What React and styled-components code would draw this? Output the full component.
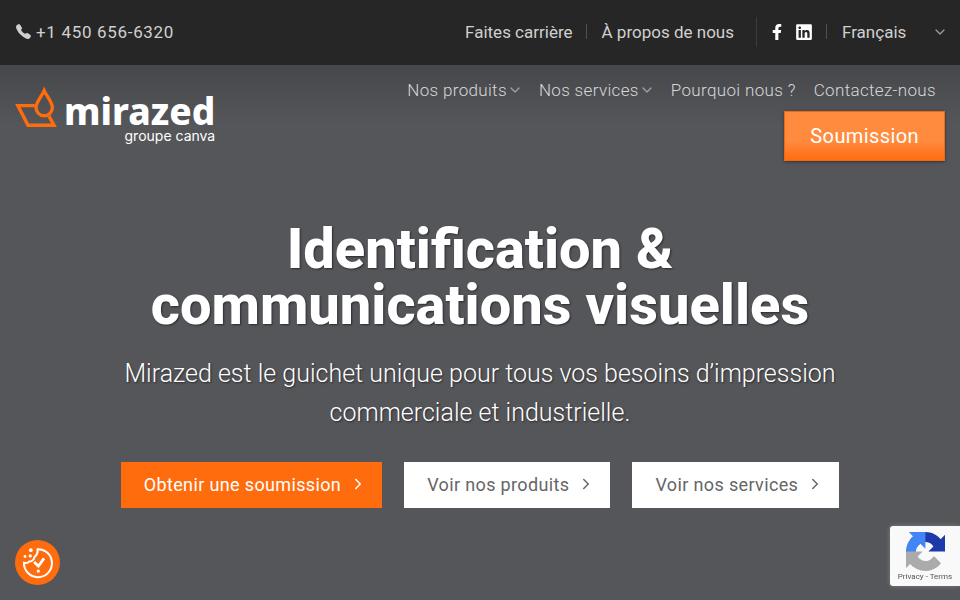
import React from 'react';
import styled, { createGlobalStyle } from 'styled-components';
import { FaFacebookF, FaLinkedin } from 'react-icons/fa';
import { FiChevronDown, FiChevronRight } from 'react-icons/fi';
import { IoCall } from 'react-icons/io5';

const GlobalStyle = createGlobalStyle`
  * {
    box-sizing: border-box;
  }
  body {
    margin: 0;
    background: #55565a;
    color: white;
    font-family: Roboto, 'Liberation Sans', sans-serif;
  }
  a {
    color: inherit;
    text-decoration: none;
  }
`;

const TopBar = styled.div`
  display: flex;
  justify-content: space-between;
  align-items: center;
  min-height: 65px;
  padding: 0 15px 2px;
  background: #262626;
  color: #d0d0d0;
  font-size: 17px;
`;

const Phone = styled.a`
  display: flex;
  align-items: center;
  gap: 4px;
  letter-spacing: 0.04em;
`;

const TopLinks = styled.div`
  display: flex;
  align-items: center;
`;

const Divider = styled.span`
  width: 1px;
  height: ${({ $tall }) => ($tall ? '30px' : '15px')};
  margin: ${({ $tall }) => ($tall ? '0 12px 0 22px' : '0 15px 0 13px')};
  background: ${({ $tall }) => ($tall ? '#3c3c3c' : '#505050')};
`;

const Socials = styled.div`
  display: flex;
  align-items: center;
  gap: 10px;
  color: white;
  a {
    display: flex;
  }
`;

const Language = styled.label`
  display: grid;
  align-items: center;
  width: 103px;
  select,
  svg {
    grid-area: 1 / 1;
  }
  select {
    appearance: none;
    width: 100%;
    padding: 0;
    border: 0;
    background: transparent;
    color: inherit;
    font: inherit;
  }
  svg {
    justify-self: end;
    margin-right: -3px;
    color: #999;
    pointer-events: none;
  }
`;

const Header = styled.header`
  display: flex;
  justify-content: space-between;
  align-items: flex-start;
  padding: 10px 15px 0;
  background: linear-gradient(#46474b, #55565a 60px);
`;

const LogoLink = styled.a`
  display: flex;
  align-items: flex-start;
  gap: 6px;
  padding-top: 11px;
`;

const LogoText = styled.span`
  display: flex;
  flex-direction: column;
  align-items: flex-end;
  padding-top: 6px;
`;

const LogoName = styled.span`
  font-family: 'Noto Sans', sans-serif;
  font-size: 37px;
  font-weight: 800;
  line-height: 38px;
`;

const LogoGroup = styled.span`
  font-family: Inter, sans-serif;
  font-size: 14px;
  line-height: 12px;
`;

const HeaderRight = styled.div`
  display: flex;
  flex-direction: column;
  align-items: flex-end;
`;

const Nav = styled.nav`
  display: flex;
  gap: 18px;
  padding-right: 9px;
  color: #d7d7d8;
  font-size: 17px;
  font-weight: 300;
  line-height: 30px;
  letter-spacing: 0.02em;
`;

const NavLink = styled.a`
  display: flex;
  align-items: center;
  svg {
    margin-right: -2px;
    color: #a0a0a2;
  }
`;

const QuoteButton = styled.button`
  height: 50px;
  margin-top: 6px;
  padding: 0 25px;
  border: 1px solid #f2680f;
  background: linear-gradient(#ff8b3e 60%, #ff6d10);
  box-shadow: 0 1px 3px rgba(0, 0, 0, 0.4);
  color: white;
  font-family: inherit;
  font-size: 20px;
  letter-spacing: 0.02em;
`;

const Hero = styled.main`
  display: flex;
  flex-direction: column;
  align-items: center;
  padding: 60px 30px 92px;
  text-align: center;
  text-shadow: 1px 1px 2px rgba(0, 0, 0, 0.5);
`;

const Title = styled.h1`
  max-width: 720px;
  margin: 0;
  font-size: 56px;
  font-weight: 800;
  line-height: 56px;
`;

const Lead = styled.p`
  max-width: 740px;
  margin: 21px 0 30px;
  font-size: 25px;
  font-weight: 300;
  line-height: 39px;
`;

const Actions = styled.div`
  display: flex;
  flex-wrap: wrap;
  justify-content: center;
  gap: 22px;
`;

const Action = styled.button`
  display: flex;
  align-items: center;
  gap: 8px;
  height: 46px;
  padding: 0 15px 2px 23px;
  border: 0;
  background: ${({ $primary }) => ($primary ? '#ff6c0e' : 'white')};
  color: ${({ $primary }) => ($primary ? 'white' : '#666')};
  font-family: inherit;
  font-size: 18px;
  letter-spacing: 0.02em;
  text-shadow: none;
`;

const CookieButton = styled.button`
  position: fixed;
  left: 15px;
  bottom: 15px;
  width: 45px;
  height: 45px;
  padding: 0;
  border: 0;
  border-radius: 50%;
  background: #ff6c0e;
  svg {
    display: block;
  }
`;

const Captcha = styled.aside`
  position: fixed;
  right: 0;
  bottom: 14px;
  display: flex;
  flex-direction: column;
  align-items: center;
  width: 70px;
  height: 60px;
  padding-top: 6px;
  border-radius: 3px 0 0 3px;
  background: #f9f9f9;
  box-shadow: 0 0 5px gray;
  color: #555;
  font-size: 8px;
  line-height: 12px;
`;

const LogoMark = () => (
  <svg width="43" height="42" viewBox="0 0 43 42" fill="none" stroke="#ff6c0e" strokeWidth="3.4">
    <path d="M19.8 19.6H2.9L13 39.2h26l-5-9" />
    <path d="M29.2 4.6C26.6 10.4 21 16.4 21 21.6a8.2 8.2 0 0 0 16.4 0C37.4 16.4 31.8 10.4 29.2 4.6z" />
  </svg>
);

const CookieIcon = () => (
  <svg width="45" height="45" viewBox="0 0 45 45" fill="none" stroke="white">
    <path
      d="M22.5 9.2A14 14 0 1 1 9 22.6c2 .8 4.2.5 5.4-1.2 2.6.2 4.9-1.7 5-4.3 2.4-1.8 3.6-4.7 3.1-7.9z"
      strokeWidth="2"
      strokeLinejoin="round"
    />
    <path d="M19.2 22l4.2 4.2 5.6-7.8" strokeWidth="2.8" />
    <g fill="white" stroke="none">
      <rect x="21.9" y="29.7" width="2.8" height="2.8" />
      <circle cx="15.8" cy="10.2" r="1.9" />
      <circle cx="10" cy="16.5" r="1.4" />
      <circle cx="15.2" cy="15.9" r="1.6" />
    </g>
  </svg>
);

const CaptchaIcon = () => (
  <svg width="39" height="39" viewBox="0 0 64 64">
    <path
      fill="#1c3aa9"
      d="M64 31.955l-.033-1.37V4.687l-7.16 7.16C50.948 4.674 42.033.093 32.05.093c-10.4 0-19.622 4.96-25.458 12.64l11.736 11.86a15.55 15.55 0 0 1 4.754-5.334c2.05-1.6 4.952-2.906 8.968-2.906.485 0 .86.057 1.135.163 4.976.393 9.288 3.14 11.828 7.124l-8.307 8.307L64 31.953"
    />
    <path
      fill="#4285f4"
      d="M31.862.094l-1.37.033H4.594l7.16 7.16C4.58 13.147 0 22.06 0 32.046c0 10.4 4.96 19.622 12.64 25.458L24.5 45.768a15.55 15.55 0 0 1-5.334-4.754c-1.6-2.05-2.906-4.952-2.906-8.968 0-.485.057-.86.163-1.135.393-4.976 3.14-9.288 7.124-11.828l8.307 8.307L31.86.095"
    />
    <path
      fill="#ababab"
      d="M.001 32.045l.033 1.37v25.898l7.16-7.16c5.86 7.173 14.774 11.754 24.76 11.754 10.4 0 19.622-4.96 25.458-12.64l-11.736-11.86a15.55 15.55 0 0 1-4.754 5.334c-2.05 1.6-4.952 2.906-8.968 2.906-.485 0-.86-.057-1.135-.163-4.976-.393-9.288-3.14-11.828-7.124l8.307-8.307c-10.522.04-22.4.066-27.295-.005"
    />
  </svg>
);

const menu = [
  { label: 'Nos produits', sub: true },
  { label: 'Nos services', sub: true },
  { label: 'Pourquoi nous ?' },
  { label: 'Contactez-nous' },
];

const App = () => (
  <>
    <GlobalStyle />
    <TopBar>
      <Phone href="tel:+14506566320">
        <IoCall size={17} />
        +1 450 656-6320
      </Phone>
      <TopLinks>
        <a href="#carriere">Faites carrière</a>
        <Divider />
        <a href="#a-propos">À propos de nous</a>
        <Divider $tall />
        <Socials>
          <a href="#facebook" aria-label="Facebook">
            <FaFacebookF size={16} />
          </a>
          <a href="#linkedin" aria-label="LinkedIn">
            <FaLinkedin size={18} />
          </a>
        </Socials>
        <Divider />
        <Language>
          <select aria-label="Langue">
            <option>Français</option>
          </select>
          <FiChevronDown size={16} />
        </Language>
      </TopLinks>
    </TopBar>
    <Header>
      <LogoLink href="#accueil">
        <LogoMark />
        <LogoText>
          <LogoName>mirazed</LogoName>
          <LogoGroup>groupe canva</LogoGroup>
        </LogoText>
      </LogoLink>
      <HeaderRight>
        <Nav>
          {menu.map(({ label, sub }) => (
            <NavLink key={label} href="#menu">
              {label}
              {sub && <FiChevronDown size={16} />}
            </NavLink>
          ))}
        </Nav>
        <QuoteButton type="button">Soumission</QuoteButton>
      </HeaderRight>
    </Header>
    <Hero>
      <Title>Identification & communications visuelles</Title>
      <Lead>
        Mirazed est le guichet unique pour tous vos besoins d’impression commerciale et industrielle.
      </Lead>
      <Actions>
        <Action type="button" $primary>
          Obtenir une soumission
          <FiChevronRight size={18} />
        </Action>
        <Action type="button">
          Voir nos produits
          <FiChevronRight size={18} />
        </Action>
        <Action type="button">
          Voir nos services
          <FiChevronRight size={18} />
        </Action>
      </Actions>
    </Hero>
    <CookieButton type="button" aria-label="Préférences de cookies">
      <CookieIcon />
    </CookieButton>
    <Captcha>
      <CaptchaIcon />
      <span>
        <a href="#privacy">Privacy</a> - <a href="#terms">Terms</a>
      </span>
    </Captcha>
  </>
);

export default App;
